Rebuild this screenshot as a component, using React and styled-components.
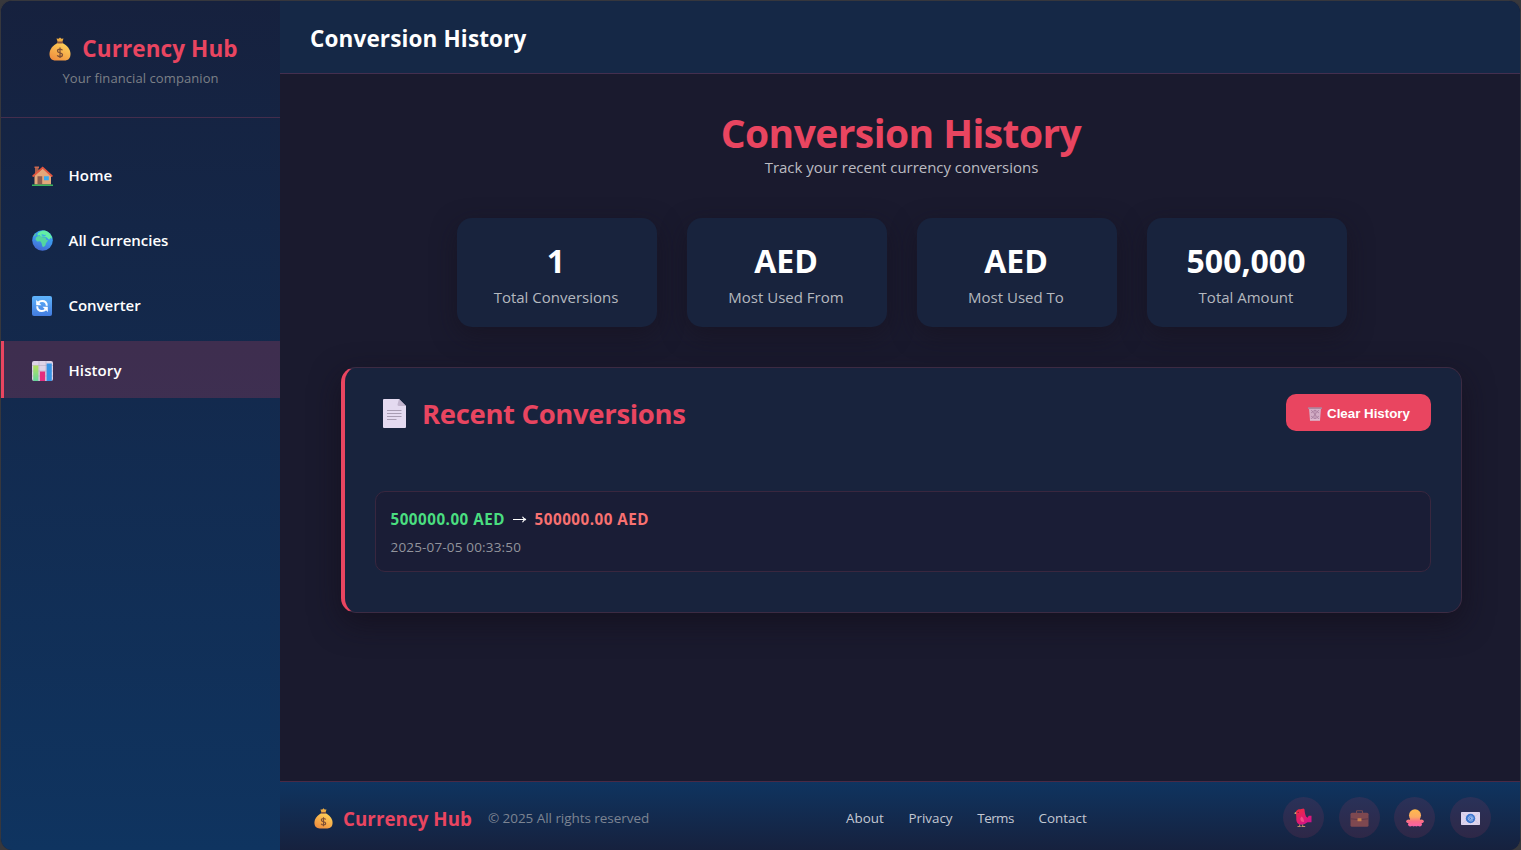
import React from 'react';
import styled, { createGlobalStyle } from 'styled-components';

const Global = createGlobalStyle`
  * { box-sizing: border-box; }
  body { margin: 0; background: #38383c; font-family: 'Open Sans', 'Noto Sans', sans-serif; color: #fff; overflow: hidden; }
  h1, h2, p { margin: 0; }
`;

const Text = styled.span`
  display: block;
  white-space: nowrap;
  font-size: ${p => p.$size}px;
  line-height: ${p => p.$lh || 20}px;
  font-weight: ${p => p.$weight || 400};
  letter-spacing: ${p => p.$ls || 0}px;
  color: ${p => p.$color || '#fff'};
`;

const Frame = styled.div`
  display: flex;
  height: 850px;
  width: 1521px;
  border: 1px solid #36373d;
  border-width: 1px 1px 0 1px;
  border-radius: 12px;
  overflow: hidden;
  background: #1a1a2e;
`;
const Sidebar = styled.aside`
  width: 279px;
  flex: none;
  background: linear-gradient(180deg, #16213e 0%, #0f3460 100%);
`;
const Brand = styled.div`
  height: 117px;
  border-bottom: 1px solid #442e4d;
  padding: 33px 0 0 0;
  display: flex;
  flex-direction: column;
  align-items: center;
`;
const BrandRow = styled.div`
  display: flex;
  align-items: center;
  gap: 11px;
  height: 30px;
  padding-left: 6px;
`;
const Nav = styled.nav`
  display: flex;
  flex-direction: column;
  gap: 8px;
  padding-top: 28px;
`;
const NavItem = styled.a`
  display: flex;
  align-items: center;
  gap: 14.5px;
  height: 57px;
  padding-left: 28px;
  border-left: 3px solid ${p => (p.$active ? '#e94560' : 'transparent')};
  background: ${p => (p.$active ? 'rgba(233, 69, 96, 0.2)' : 'none')};
`;
const NavIcon = styled.span`
  display: flex;
  width: 22px;
  padding-top: 2px;
`;
const Content = styled.div`
  flex: 1;
  display: flex;
  flex-direction: column;
  min-width: 0;
`;
const Header = styled.header`
  height: 73px;
  flex: none;
  display: flex;
  align-items: center;
  padding: 3px 0 0 30px;
  background: #152846;
  border-bottom: 1px solid #442f4f;
`;
const Main = styled.main`
  flex: 1;
  padding: 35px 58px 0 61px;
  display: flex;
  flex-direction: column;
  align-items: center;
`;
const Title = styled.div`
  padding-right: 1px;
`;
const Stats = styled.div`
  display: flex;
  gap: 30px;
  margin: 39px 0 40px;
`;
const StatCard = styled.div`
  width: 200px;
  height: 109px;
  border-radius: 15px;
  background: #18233d;
  box-shadow: 0 8px 25px rgba(22, 16, 28, 0.5);
  display: flex;
  flex-direction: column;
  align-items: center;
  padding: 23px 1px 0 0;
`;
const Panel = styled.section`
  align-self: stretch;
  height: 246px;
  border: 1px solid #3c2b43;
  border-left: 4px solid #e94560;
  border-radius: 15px;
  background: #18233d;
  box-shadow: 0 10px 30px rgba(18, 12, 24, 0.6);
  padding: 26px 30px 0;
`;
const PanelHead = styled.div`
  display: flex;
  justify-content: space-between;
  height: 97px;
`;
const PanelTitle = styled.div`
  display: flex;
  align-items: center;
  gap: 16px;
  height: 39px;
  padding-left: 8px;
`;
const ClearButton = styled.button`
  display: flex;
  align-items: center;
  gap: 5px;
  width: 145px;
  height: 37px;
  padding: 2px 0 0 22px;
  border: 0;
  border-radius: 10px;
  background: #e94560;
  font-family: 'Liberation Sans', Arial, sans-serif;
`;
const Entry = styled.article`
  height: 81px;
  border: 1px solid #39273f;
  border-radius: 10px;
  background: #1a1d36;
  padding: 16px 14.5px;
`;
const EntryRow = styled.div`
  display: flex;
  align-items: center;
  gap: 7.8px;
  height: 21px;
  margin-bottom: 8px;
`;
const Footer = styled.footer`
  height: 69px;
  flex: none;
  display: flex;
  align-items: center;
  border-top: 1px solid #4a2a45;
  background: linear-gradient(180deg, #0f3460 0%, #16213e 100%);
  padding: 4px 28px 0 34px;
`;
const FooterBrand = styled.div`
  display: flex;
  align-items: center;
  gap: 9px;
  width: 532px;
`;
const FooterLogo = styled.span`
  display: flex;
  width: 20px;
  padding-top: 1px;
`;
const FooterName = styled.div`
  padding-top: 2px;
`;
const Copyright = styled.div`
  margin-left: 7px;
`;
const Links = styled.nav`
  display: flex;
  gap: 24.7px;
  flex: 1;
`;
const Socials = styled.div`
  display: flex;
  gap: 14.7px;
`;
const Social = styled.a`
  width: 41px;
  height: 41px;
  margin-top: -2px;
  padding-top: 2px;
  border-radius: 50%;
  background: rgba(233, 69, 96, 0.12);
  display: flex;
  align-items: center;
  justify-content: center;
  &:last-child { margin-right: 1px; }
`;

const MoneyBag = ({ size }) => (
  <svg width={size} height={size * 1.1} viewBox="0 0 22 24">
    <defs>
      <linearGradient id="bag" x1="0.8" y1="0" x2="0.2" y2="1">
        <stop offset="0" stopColor="#ffd45a" /><stop offset="1" stopColor="#ee8c3e" />
      </linearGradient>
    </defs>
    <path d="M7.500 1.500L9.600 1.600 11 .3 12.400 1.600 14.500 1.500 13.300 5H8.700Z" fill="#edac43" />
    <path d="M8.500 6C4 8.500.5 12 .5 17c0 4.500 2.500 6.500 6 6.500h9c3.500 0 6-2 6-6.500 0-5-3.500-8.500-8-11Z" fill="url(#bag)" />
    <rect x="8" y="4.500" width="6" height="1.900" rx=".9" fill="#8b553e" />
    <path d="M13.500 13.200c-.5-.9-1.400-1.200-2.500-1.200-1.500 0-2.500.7-2.500 1.800 0 2.700 5 1.300 5 3.900 0 1.100-1 1.900-2.500 1.900-1.200 0-2.200-.5-2.700-1.500M11 10.500v10.500" fill="none" stroke="#7d4f35" strokeWidth="1.300" />
  </svg>
);
const House = () => (
  <svg width="21" height="20" viewBox="0 0 21 20">
    <path d="M3 1h3.500v8H3z" fill="#a9604d" /><path d="M2.500.5h4.500v1.500H2.500z" fill="#cc6850" />
    <path d="M2.500 9.500L11 2l8 7.500V18.500H2.500z" fill="#e3a77b" />
    <path d="M1.200 10L10.700 1.600 19.800 10" fill="none" stroke="#e2563f" strokeWidth="1.800" strokeLinecap="round" />
    <path d="M5.500 10.300h4.700v8.200H5.500z" fill="#8c5b50" /><path d="M12 10.200h4.800v4H12z" fill="#37a9ef" />
    <path d="M0 18.400h21v1.600H0z" fill="#3bb45d" />
  </svg>
);
const Globe = () => (
  <svg width="21" height="21" viewBox="0 0 21 21">
    <defs><linearGradient id="sea" x1=".7" y1="0" x2=".3" y2="1"><stop stopColor="#3ba9f4" /><stop offset=".55" stopColor="#3e91ea" /><stop offset="1" stopColor="#4564cf" /></linearGradient></defs>
    <circle cx="10.500" cy="10.500" r="10.300" fill="url(#sea)" />
    <path d="M4 7.500L6 6l2.800.2 1.200 1 3.500.2 1 2.600 1.800.3-2.400 3-.4 2-1.800 1.700-1.300-.4-.9-3.600-1.200-1.700-3.200.1-1.600-1.800Z" fill="#54d6a0" />
    <path d="M5.500 3.500C8 1 11 .2 13.500.7c2.500.7 4.700 2.700 6 5.300l.7 3-1.700-1.200-1.400 2-2.600-2.500-2.500-.8-3 .2-1.200-1.500-2.200.2Z" fill="#62efa5" />
    <path d="M9 4.800l1.700-.6 1.500.9 1.600-.3-.4 1.100-2.700.2z" fill="#3bafe0" />
    <path d="M1.300 6L3.300 3.500l1 .8-1.700 2.200z" fill="#54c99d" />
  </svg>
);
const Refresh = () => (
  <svg width="20" height="20" viewBox="0 0 20 20">
    <defs><linearGradient id="blue" x1="0" y1="0" x2="0" y2="1"><stop stopColor="#5fb4fb" /><stop offset="1" stopColor="#427be0" /></linearGradient></defs>
    <rect width="20" height="20" rx="2" fill="url(#blue)" />
    <path d="M14.800 9.800c0-3-2-4.800-4.700-4.800-1.500 0-2.800.5-3.700 1.500M5.200 10.200c0 3 2 4.800 4.700 4.800 1.500 0 2.800-.5 3.700-1.500" fill="none" stroke="#fff" strokeWidth="2" />
    <path d="M4.200 4v5.300h5.300zM15.800 16v-5.300h-5.300z" fill="#fff" />
  </svg>
);
const Chart = () => (
  <svg width="21" height="20" viewBox="0 0 21 20">
    <defs><linearGradient id="green" x1="0" y1="0" x2="0" y2="1"><stop stopColor="#b6e15e" /><stop offset="1" stopColor="#65d49b" /></linearGradient></defs>
    <rect width="21" height="20" rx="2" fill="#ded3e7" />
    <path d="M0 4.500h21M0 10h21M0 15h21M7 0v20M14 0v20" stroke="#b7adc4" strokeWidth=".6" />
    <rect x="1.200" y="4.500" width="5.200" height="15.500" fill="url(#green)" />
    <rect x="7.900" y="10.500" width="5.200" height="9.500" fill="#e42e7e" />
    <rect x="14.600" y="2.500" width="5.200" height="17.500" fill="#3794e5" />
  </svg>
);
const Page = () => (
  <svg width="23" height="29" viewBox="0 0 23 29">
    <path d="M1 0H16L23 7V28a1 1 0 0 1-1 1H1a1 1 0 0 1-1-1V1a1 1 0 0 1 1-1Z" fill="#e4daf0" />
    <path d="M16 0L23 7H16a1.500 1.500 0 0 1-1.500-1.500z" fill="#c2b5ce" />
    <path d="M4 11.500H18.500M4 14.500H18.500M4 17.500H18.500M4 20.500H13.500" stroke="#a89db3" strokeWidth="1.100" />
  </svg>
);
const Trash = () => (
  <svg width="14" height="14" viewBox="0 0 14 14">
    <path d="M1 1.500H13L12 13.500H2Z" fill="#d3aec6" />
    <path d="M3.200 3l7.600 9M10.800 3l-7.600 9M7 3v10M3 6l4-3 4 3M3 9l4 3 4-3" stroke="#a77c9d" strokeWidth=".8" fill="none" />
    <rect y=".3" width="14" height="1.700" rx=".5" fill="#ad879f" /><rect x="2" y="12" width="10" height="1.600" fill="#dcb9ce" />
  </svg>
);
const Parrot = () => (
  <svg width="20" height="20" viewBox="0 0 20 20">
    <defs><linearGradient id="bird" x1=".2" y1="0" x2=".8" y2="1"><stop stopColor="#ed2a42" /><stop offset=".6" stopColor="#e01a73" /><stop offset="1" stopColor="#c91390" /></linearGradient></defs>
    <path d="M3 3.500C4 1.700 5.500 1.200 7.500 1.300L10.500.5Q12 1 11.700 3.500 12 6 13 8.500L14.500 9.700 15.800 7.800 18.500 7.800V14.300H14.500Q12 16.700 8.500 16.700C4.500 16.700 3 13.500 3.300 10Z" fill="url(#bird)" />
    <path d="M8.500 8.500Q11 10 11 14 7.500 14.300 7.300 10.500Z" fill="#f24b86" />
    <path d="M3.200 3.700L1 5.200 3.200 6.300z" fill="#d6b073" /><circle cx="5.200" cy="4.300" r=".6" fill="#582143" />
    <path d="M6.700 16.500v2M9.700 16.500v2M4.500 18.500h3.200M8.500 18.500h3.700" stroke="#c08d6a" strokeWidth="1" />
  </svg>
);
const Briefcase = () => (
  <svg width="19" height="17" viewBox="0 0 19 17">
    <path d="M6.500 3V1.500q0-.8.8-.8h4.400q.8 0 .8.800V3" fill="none" stroke="#784b50" strokeWidth="1.100" />
    <rect x=".5" y="2.700" width="18" height="14" rx="1.500" fill="#7e4850" />
    <path d="M.5 8.800Q9.500 10.500 18.500 8.800" stroke="#5f3849" fill="none" />
    <rect x="7.500" y="8.300" width="4" height="3" rx=".5" fill="#c8804d" />
  </svg>
);
const Octopus = () => (
  <svg width="18" height="18" viewBox="0 0 18 18">
    <defs>
      <linearGradient id="octo" gradientUnits="userSpaceOnUse" x1="0" y1="0" x2="0" y2="18"><stop stopColor="#ffbb4c" /><stop offset=".45" stopColor="#fba861" /><stop offset=".68" stopColor="#fb6d86" /><stop offset="1" stopColor="#fb5faa" /></linearGradient>
    </defs>
    <g fill="url(#octo)">
      <circle cx="9" cy="6.200" r="6" />
      <path d="M4.500 8.500H13.500L14.500 12.500 12.500 15.500H5.500L3.500 12.500Z" />
      <ellipse cx="2.700" cy="12.300" rx="2.500" ry="1.900" />
      <ellipse cx="15.300" cy="12.300" rx="2.500" ry="1.900" />
      <circle cx="4.300" cy="15.200" r="2.200" />
      <circle cx="13.700" cy="15.200" r="2.200" />
      <circle cx="7.600" cy="15.500" r="1.900" />
      <circle cx="10.400" cy="15.500" r="1.900" />
    </g>
  </svg>
);
const Mail = () => (
  <svg width="19" height="13" viewBox="0 0 19 13">
    <rect width="19" height="13" rx=".8" fill="#ded5ee" /><path d="M0 0L7 6.500 0 13M19 0L12 6.500 19 13" fill="none" stroke="#c9c1de" strokeWidth=".6" />
    <circle cx="9.500" cy="6.500" r="4.700" fill="#3b75cd" />
    <path d="M11.700 8.500c-2 1.300-4.500 0-4.500-2 0-1.400 1-2.500 2.400-2.500 1.500 0 2.600 1 2.400 2.800-.4.800-1.200.5-1.200-.3V5.500M10.800 6.500a1.200 1.200 0 1 1-2.400 0 1.200 1.200 0 0 1 2.400 0" fill="none" stroke="#c5d9fb" strokeWidth=".7" />
  </svg>
);

const NAV = [
  { label: 'Home', Icon: House, ls: 0.1 },
  { label: 'All Currencies', Icon: Globe, ls: 0 },
  { label: 'Converter', Icon: Refresh, ls: -0.03 },
  { label: 'History', Icon: Chart, ls: 0.1, active: true },
];
const STATS = [
  ['1', 'Total Conversions'],
  ['AED', 'Most Used From'],
  ['AED', 'Most Used To'],
  ['500,000', 'Total Amount'],
];
const LINKS = [
  ['About', 0],
  ['Privacy', 0],
  ['Terms', -0.5],
  ['Contact', 0],
];

export default function App() {
  return (
    <Frame>
      <Global />
      <Sidebar>
        <Brand>
          <BrandRow>
            <MoneyBag size={22} />
            <Text $size={22.5} $weight={700} $color="#e94560" $lh={30} $ls={0.1}>Currency Hub</Text>
          </BrandRow>
          <Text $size={13} $color="#7c8087" $lh={28} $ls={0.08}>Your financial companion</Text>
        </Brand>
        <Nav>
          {NAV.map(({ label, Icon, ls, active }) => (
            <NavItem key={label} $active={active}>
              <NavIcon><Icon /></NavIcon>
              <Text $size={15} $weight={600} $ls={ls}>{label}</Text>
            </NavItem>
          ))}
        </Nav>
      </Sidebar>
      <Content>
        <Header>
          <Text as="h1" $size={22.5} $weight={700} $lh={30} $ls={0.14}>Conversion History</Text>
        </Header>
        <Main>
          <Title>
            <Text as="h2" $size={39} $weight={700} $color="#e94560" $lh={47} $ls={-0.58}>Conversion History</Text>
          </Title>
          <Text as="p" $size={15} $color="#bcbcc2" $lh={23} $ls={-0.03}>Track your recent currency conversions</Text>
          <Stats>
            {STATS.map(([value, label]) => (
              <StatCard key={label}>
                <Text $size={32} $weight={700} $lh={40}>{value}</Text>
                <Text $size={15} $color="#b4b8bf" $lh={32}>{label}</Text>
              </StatCard>
            ))}
          </Stats>
          <Panel>
            <PanelHead>
              <PanelTitle>
                <Page />
                <Text as="h2" $size={27.5} $weight={700} $color="#e94560" $lh={40} $ls={-0.35}>Recent Conversions</Text>
              </PanelTitle>
              <ClearButton><Trash /><Text $size={13.33} $weight={700}>Clear History</Text></ClearButton>
            </PanelHead>
            <Entry>
              <EntryRow>
                <Text $size={15.2} $weight={700} $color="#4ade80" $ls={0.5}>500000.00 AED</Text>
                <svg width="14" height="8" viewBox="0 0 14 8"><path d="M0 4.500H12.500M9.500 1.800Q10.500 4 13 4.500 10.500 5 9.500 7.200" stroke="#fff" fill="none" strokeWidth="1.100" /></svg>
                <Text $size={15.2} $weight={700} $color="#f87171" $ls={0.5}>500000.00 AED</Text>
              </EntryRow>
              <Text $size={13.5} $color="#92949c" $ls={0.17}>2025-07-05 00:33:50</Text>
            </Entry>
          </Panel>
        </Main>
        <Footer>
          <FooterBrand>
            <FooterLogo><MoneyBag size={19} /></FooterLogo>
            <FooterName><Text $size={18.7} $weight={700} $color="#e94560" $lh={26} $ls={0.08}>Currency Hub</Text></FooterName>
            <Copyright><Text $size={13.5} $color="#7c8492" $ls={-0.05}>© 2025 All rights reserved</Text></Copyright>
          </FooterBrand>
          <Links>
            {LINKS.map(([label, ls]) => <Text key={label} $size={13.4} $color="#c3c8d2" $ls={ls}>{label}</Text>)}
          </Links>
          <Socials>
            <Social><Parrot /></Social>
            <Social><Briefcase /></Social>
            <Social><Octopus /></Social>
            <Social><Mail /></Social>
          </Socials>
        </Footer>
      </Content>
    </Frame>
  );
}
